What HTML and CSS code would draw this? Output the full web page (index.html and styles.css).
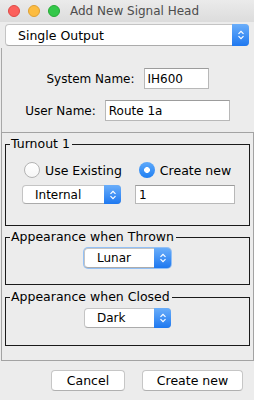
FILE: index.html
```html
<!DOCTYPE html>
<html lang="en">
<head>
    <meta charset="UTF-8">
    <meta name="viewport" content="width=device-width, initial-scale=1.0">
    <title>Add New Signal Head</title>
    <link rel="stylesheet" href="styles.css">
</head>
<body>
    <header class="titlebar">
        <span class="light red"></span>
        <span class="light yellow"></span>
        <span class="light green"></span>
        <span class="title">Add New Signal Head</span>
    </header>

    <div class="combo combo-wide">
        <span class="combo-text">Single Output</span>
        <span class="combo-arrow">
            <svg width="8" height="12" viewBox="0 0 8 12"><path d="M1.5 4.8 L4 2.3 L6.5 4.8 M1.5 7.2 L4 9.7 L6.5 7.2" fill="none" stroke="#fff" stroke-width="1.2"/></svg>
        </span>
    </div>

    <div class="names">
        <div class="name-row">
            <label>System Name:</label>
            <div class="field field-system">IH600</div>
        </div>
        <div class="name-row">
            <label>User Name:</label>
            <div class="field field-user">Route 1a</div>
        </div>
    </div>

    <div class="outer">
        <fieldset class="group group-turnout">
            <legend>Turnout 1</legend>
            <div class="radio-row">
                <span class="radio"></span>
                <span class="radio-label">Use Existing</span>
                <span class="radio checked"></span>
                <span class="radio-label">Create new</span>
            </div>
            <div class="turnout-row">
                <div class="combo combo-internal">
                    <span class="combo-text">Internal</span>
                    <span class="combo-arrow">
                        <svg width="8" height="12" viewBox="0 0 8 12"><path d="M1.5 4.8 L4 2.3 L6.5 4.8 M1.5 7.2 L4 9.7 L6.5 7.2" fill="none" stroke="#fff" stroke-width="1.2"/></svg>
                    </span>
                </div>
                <div class="field field-number">1</div>
            </div>
        </fieldset>

        <fieldset class="group group-thrown">
            <legend>Appearance when Thrown</legend>
            <div class="combo combo-aspect focused">
                <span class="combo-text">Lunar</span>
                <span class="combo-arrow">
                    <svg width="8" height="12" viewBox="0 0 8 12"><path d="M1.5 4.8 L4 2.3 L6.5 4.8 M1.5 7.2 L4 9.7 L6.5 7.2" fill="none" stroke="#fff" stroke-width="1.2"/></svg>
                </span>
            </div>
        </fieldset>

        <fieldset class="group group-closed">
            <legend>Appearance when Closed</legend>
            <div class="combo combo-aspect">
                <span class="combo-text">Dark</span>
                <span class="combo-arrow">
                    <svg width="8" height="12" viewBox="0 0 8 12"><path d="M1.5 4.8 L4 2.3 L6.5 4.8 M1.5 7.2 L4 9.7 L6.5 7.2" fill="none" stroke="#fff" stroke-width="1.2"/></svg>
                </span>
            </div>
        </fieldset>
    </div>

    <div class="buttons">
        <button class="btn btn-cancel">Cancel</button>
        <button class="btn btn-create">Create new</button>
    </div>
</body>
</html>
```

FILE: styles.css
```css
* {
    box-sizing: border-box;
}

body {
    margin: 0;
    width: 254px;
    height: 400px;
    overflow: hidden;
    background-color: #ececec;
    font-family: "DejaVu Sans", "Liberation Sans", sans-serif;
    font-size: 12px;
    color: #000;
}

.titlebar {
    height: 22px;
    display: flex;
    align-items: center;
    padding-left: 8px;
    background: linear-gradient(#ebebeb, #dcdcdc);
}

.light {
    width: 12px;
    height: 12px;
    border-radius: 50%;
    margin-right: 8px;
}

.red {
    background: #fc605c;
    border: 1px solid #de4a46;
}

.yellow {
    background: #fdbc40;
    border: 1px solid #dea033;
}

.green {
    background: #34c84a;
    border: 1px solid #27aa36;
}

.title {
    margin-left: 2px;
    color: #4d4d4d;
}

/* popup combo box */
.combo {
    display: flex;
    align-items: stretch;
    background: #fff;
    border: 1px solid #c4c4c4;
    border-bottom-color: #ababab;
    border-radius: 4px;
}

.combo-text {
    flex: 1;
    padding-left: 12px;
    display: flex;
    align-items: center;
}

.combo-arrow {
    width: 17px;
    margin: -1px -1px -1px 0;
    display: flex;
    align-items: center;
    justify-content: center;
    border-radius: 0 4px 4px 0;
    background: linear-gradient(#6aaefa, #1e78f0);
}

.combo-wide {
    margin: 2px 5px 0;
    height: 22px;
    font-size: 12.5px;
}

.combo-internal {
    width: 99px;
    height: 19px;
}

.combo-aspect {
    width: 87px;
    height: 20px;
    margin: 4px auto 0;
}

.combo-aspect.focused {
    box-shadow: 0 0 0 1px #93c0f5;
}

/* name fields */
.names {
    margin: 2px 0 0 1px;
    height: 84px;
    padding-top: 20px;
    border-left: 1px solid #a8a8a8;
    display: flex;
    flex-direction: column;
    gap: 11px;
}

.name-row {
    display: flex;
    justify-content: center;
    align-items: center;
    gap: 9px;
    margin-left: -1px;
}

.field {
    background: #fff;
    border: 1px solid #b8b8b8;
    border-top-color: #9c9c9c;
    height: 21px;
    padding-left: 3px;
    display: flex;
    align-items: center;
}

.field-system {
    width: 65px;
}

.field-user {
    width: 125px;
}

.field-number {
    width: 100px;
    height: 19px;
}

/* bordered groups */
.outer {
    margin-left: 1px;
    height: 229px;
    border: 1px solid #a3a3a3;
    padding: 4px 3px 0;
}

.group {
    margin: 0;
    padding: 0;
    border: 1px solid #1a1a1a;
    min-width: 0;
}

.group legend {
    margin-left: 4px;
    padding: 0 2px 0 1px;
    line-height: 14px;
    font-size: 12.5px;
}

.group-turnout {
    height: 89px;
}

.group-thrown {
    margin-top: 4px;
    height: 55px;
}

.group-closed {
    margin-top: 5px;
    height: 56px;
}

.radio-row {
    display: flex;
    align-items: center;
    margin-top: 11px;
    padding-left: 18px;
    height: 16px;
}

.radio {
    width: 16px;
    height: 16px;
    border-radius: 50%;
    background: linear-gradient(#fff, #f6f6f6);
    border: 1px solid #b3b3b3;
    flex-shrink: 0;
}

.radio.checked {
    border: none;
    background: radial-gradient(circle, #fff 0 2.6px, transparent 3.2px),
        linear-gradient(#5ea9fb, #1f7ff2);
    margin-left: 17px;
}

.radio-label {
    margin-left: 5px;
    font-size: 12.5px;
}

.turnout-row {
    display: flex;
    align-items: center;
    gap: 14px;
    margin-top: 7px;
    padding-left: 16px;
}

/* buttons */
.buttons {
    display: flex;
    justify-content: flex-end;
    gap: 17px;
    margin-top: 9px;
    padding-right: 11px;
}

.btn {
    height: 21px;
    background: #fff;
    border: 1px solid #c6c6c6;
    border-bottom-color: #b0b0b0;
    border-radius: 4px;
    font-family: inherit;
    font-size: 12.5px;
    color: #000;
    padding: 0;
}

.btn-cancel {
    width: 74px;
}

.btn-create {
    width: 101px;
}
```
